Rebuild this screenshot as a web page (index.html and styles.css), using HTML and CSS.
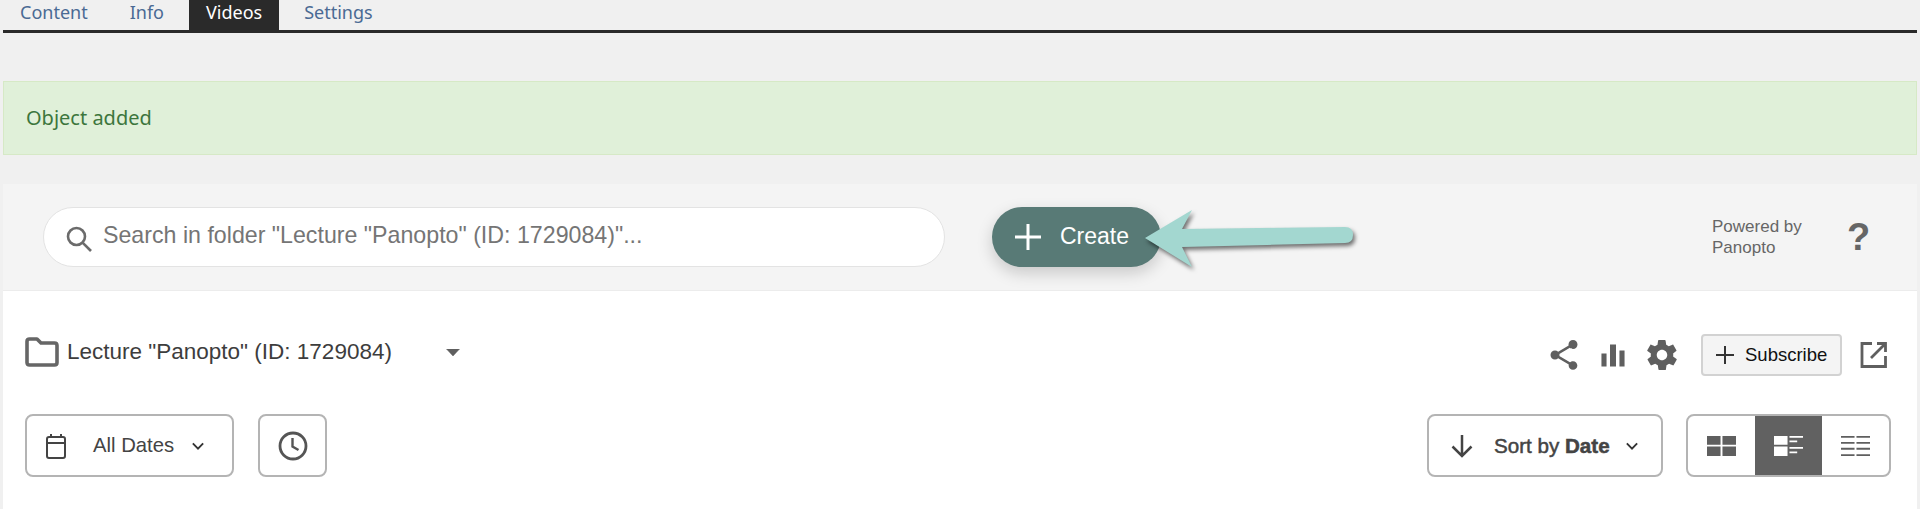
FILE: index.html
```html
<!DOCTYPE html>
<html lang="en">

    <head>
        <meta charset="UTF-8">
        <meta name="viewport" content="width=device-width, initial-scale=1.0">
        <title>Videos</title>

        <link rel="stylesheet" href="styles.css">

    </head>

    <body>

        <nav class="tabs">
            <a class="tab">Content</a>
            <a class="tab">Info</a>
            <a class="tab tab_active">Videos</a>
            <a class="tab">Settings</a>
        </nav>

        <div class="alert">Object added</div>

        <main class="panel">

            <div class="search_bar">
                <div class="search_box">
                    <svg class="search_icon" viewBox="0 0 28 28"><circle cx="11.5" cy="11.5" r="8.5" fill="none" stroke="#6b6b6b" stroke-width="2.6"/><path d="M17.8 17.8 L26 26" stroke="#6b6b6b" stroke-width="2.6" fill="none"/></svg>
                    <span class="search_text">Search in folder "Lecture "Panopto" (ID: 1729084)"...</span>
                </div>
                <div class="create_wrap">
                    <button class="create_button">
                        <svg class="create_plus" viewBox="0 0 26 26"><path d="M13 0 V26 M0 13 H26" stroke="#fff" stroke-width="3" fill="none"/></svg>
                        <span class="create_text">Create</span>
                    </button>
                    <svg class="arrow" viewBox="0 0 220 70"><path d="M5 33 L52 5 L42 24 L205 22 Q213 22 213 30 Q213 38 205 38 L42 42 L52 62 Z" fill="#a3d7d0"/></svg>
                </div>
                <div class="powered">Powered by<br>Panopto</div>
                <div class="help">?</div>
            </div>

            <div class="folder_row">
                <svg class="folder_icon" viewBox="0 0 34 30"><path d="M2 4.500 Q2 2 4.500 2 H12 L16 6 H29.500 Q32 6 32 8.500 V25.500 Q32 28 29.500 28 H4.500 Q2 28 2 25.500 Z" fill="none" stroke="#666" stroke-width="3.600" stroke-linejoin="round"/></svg>
                <span class="folder_name">Lecture "Panopto" (ID: 1729084)</span>
                <svg class="caret" viewBox="0 0 14 7"><path d="M0.500 0 H13.500 L7 7 Z" fill="#5f5f5f" stroke="#5f5f5f" stroke-width="0.500" stroke-linejoin="round"/></svg>
                <div class="folder_actions">
                    <svg class="action_icon" viewBox="0 0 24 24"><path d="M18 16.1c-.8 0-1.5.3-2 .8l-7.1-4.2c.1-.2.1-.5.1-.7s0-.5-.1-.7l7-4.1c.5.5 1.3.8 2.1.8 1.7 0 3-1.3 3-3s-1.3-3-3-3-3 1.3-3 3c0 .2 0 .5.1.7l-7 4.1C7.500 9.300 6.800 9 6 9c-1.700 0-3 1.300-3 3s1.300 3 3 3c.8 0 1.500-.3 2.100-.8l7.100 4.200c-.1.2-.1.4-.1.600 0 1.600 1.300 2.900 2.900 2.900s2.900-1.300 2.900-2.900-1.300-2.900-2.900-2.900z" fill="#5f5f5f"/></svg>
                    <svg class="action_icon" viewBox="0 0 24 24"><path d="M4.300 11h3.400v8.700H4.300zM10 5h4v14.700h-4zM16.300 9h3.400v10.700h-3.400z" fill="#5f5f5f"/></svg>
                    <svg class="action_icon" viewBox="0 0 24 24"><path d="M19.400 13c0-.3.1-.6.1-1s0-.7-.1-1l2.100-1.600c.2-.2.2-.4.1-.6l-2-3.500c-.1-.2-.4-.3-.6-.2l-2.500 1c-.5-.4-1.100-.7-1.700-1l-.4-2.600c0-.3-.2-.5-.5-.5h-4c-.3 0-.5.2-.5.400l-.4 2.700c-.6.3-1.200.6-1.700 1l-2.500-1c-.2-.1-.5 0-.6.2l-2 3.500c-.1.2-.1.4.1.6L4.600 11c0 .3-.1.7-.1 1s0 .7.1 1l-2.100 1.600c-.2.2-.2.4-.1.6l2 3.500c.1.2.4.3.6.2l2.500-1c.5.4 1.100.7 1.700 1l.4 2.600c0 .3.2.5.5.5h4c.3 0 .5-.2.5-.4l.4-2.700c.6-.3 1.200-.6 1.700-1l2.500 1c.2.1.5 0 .6-.2l2-3.500c.1-.2.1-.4-.1-.6L19.400 13zM12 15.500c-1.900 0-3.500-1.600-3.500-3.500s1.600-3.500 3.500-3.500 3.500 1.600 3.500 3.500-1.600 3.500-3.500 3.500z" fill="#5f5f5f"/></svg>
                    <button class="subscribe_button">
                        <svg class="subscribe_plus" viewBox="0 0 18 18"><path d="M9 0 V18 M0 9 H18" stroke="#333" stroke-width="2" fill="none"/></svg>
                        <span>Subscribe</span>
                    </button>
                    <svg class="open_icon" viewBox="0 0 28 28"><path d="M12 2.500 H2 V25.500 H25.500 V15 M17 2.500 H25.500 V11 M25 3 L11 17" fill="none" stroke="#5f5f5f" stroke-width="2.800"/></svg>
                </div>
            </div>

            <div class="filter_row">
                <button class="box_button dates_button">
                    <svg class="calendar_icon" viewBox="0 0 22 26"><path d="M2 6 Q2 4 4 4 H18 Q20 4 20 6 V23 Q20 25 18 25 H4 Q2 25 2 23 Z M2 10 H20 M6 1 V5 M16 1 V5" fill="none" stroke="#444" stroke-width="2"/></svg>
                    <span>All Dates</span>
                    <svg class="chevron" viewBox="0 0 14 9"><path d="M1 1.500 L7 7.500 L13 1.500" fill="none" stroke="#333" stroke-width="2.200"/></svg>
                </button>
                <button class="box_button clock_button">
                    <svg class="clock_icon" viewBox="0 0 30 30"><circle cx="15" cy="15" r="13" fill="none" stroke="#555" stroke-width="2.800"/><path d="M14.500 7 V15.500 L20.500 19" fill="none" stroke="#555" stroke-width="2.400"/></svg>
                </button>
                <button class="box_button sort_button">
                    <svg class="sort_icon" viewBox="0 0 24 24"><path d="M12 1 V22 M2.500 12.500 L12 22 L21.500 12.500" fill="none" stroke="#444" stroke-width="2.500"/></svg>
                    <span class="sort_label">Sort by <b>Date</b></span>
                    <svg class="chevron sort_chevron" viewBox="0 0 14 9"><path d="M1 1.500 L7 7.500 L13 1.500" fill="none" stroke="#333" stroke-width="2.200"/></svg>
                </button>
                <div class="view_group">
                    <div class="view_item">
                        <svg class="view_icon" viewBox="0 0 30 22" preserveAspectRatio="none"><path d="M0 0h14v9.500H0zM16 0h14v9.500H16zM0 11.500h14V22H0zM16 11.500h14V22H16z" fill="#5f5f5f"/></svg>
                    </div>
                    <div class="view_item view_active">
                        <svg class="view_icon" viewBox="0 0 30 22" preserveAspectRatio="none"><path d="M0 0h14v9.500H0zM0 11.500h14V22H0zM16 0h14v2H16zM16 5h8v2H16zM16 12h14v2H16zM16 17h8v2H16z" fill="#fff"/></svg>
                    </div>
                    <div class="view_item">
                        <svg class="view_icon" viewBox="0 0 30 22" preserveAspectRatio="none"><path d="M0 0h14v2H0zM16 0h14v2H16zM0 6.500h14v2H0zM16 6.500h14v2H16zM0 13h14v2H0zM16 13h14v2H16zM0 20h14v2H0zM16 20h14v2H16z" fill="#5f5f5f"/></svg>
                    </div>
                </div>
            </div>

        </main>

    </body>

</html>
```
FILE: styles.css
```css
html {
    overflow: hidden;
}

body {
    margin: 0;
    padding: 0 3px;
    height: 100vh;
    display: flex;
    flex-direction: column;
    background-color: #f0f0f0;
    font-family: "Liberation Sans", Arial, sans-serif;
}

button {
    font-family: inherit;
}

.tabs {
    display: flex;
    gap: 8px;
    height: 30px;
    border-bottom: 3px solid #2a2a2a;
}

.tab {
    padding: 0 17px;
    font-family: "Noto Sans", sans-serif;
    font-size: 18px;
    line-height: 25px;
    color: #4a6a94;
}

.tab_active {
    background-color: #2a2a2a;
    color: white;
}

.alert {
    margin-top: 48px;
    height: 72px;
    line-height: 72px;
    padding-left: 22px;
    background-color: #e0f0d9;
    border: 1px solid #d6e9c6;
    color: #3c763d;
    font-family: "Noto Sans", sans-serif;
    font-size: 20px;
}

.panel {
    flex-grow: 1;
    margin-top: 29px;
    background-color: white;
}

.search_bar {
    display: flex;
    align-items: center;
    height: 106px;
    padding-left: 40px;
    background-color: #f4f4f4;
    border-bottom: 1px solid #ececec;
}

.search_box {
    display: flex;
    align-items: center;
    box-sizing: border-box;
    width: 902px;
    height: 60px;
    padding-left: 21px;
    background-color: white;
    border: 1px solid #e3e3e3;
    border-radius: 30px;
    font-size: 23.200px;
    color: #757575;
}

.search_text {
    margin-bottom: 3px;
}

.search_icon {
    width: 28px;
    height: 28px;
    margin-top: 4px;
    margin-right: 10px;
}

.create_wrap {
    position: relative;
    margin-left: 47px;
}

.create_button {
    display: flex;
    align-items: center;
    width: 169px;
    height: 60px;
    padding: 0 0 0 23px;
    background-color: #587a76;
    border: none;
    border-radius: 30px;
    box-shadow: 0 6px 16px rgba(0, 0, 0, 0.18);
    color: white;
    font-size: 23px;
}

.create_text {
    margin-bottom: 2px;
}

.create_plus {
    width: 26px;
    height: 26px;
    margin-right: 19px;
}

.arrow {
    position: absolute;
    left: 148px;
    top: -2px;
    width: 220px;
    height: 70px;
    filter: drop-shadow(2px 3px 2px rgba(0, 0, 0, 0.55));
}

.powered {
    margin-left: auto;
    width: 135px;
    font-size: 17px;
    line-height: 21px;
    color: #666;
}

.help {
    width: 70px;
    font-size: 38px;
    font-weight: bold;
    color: #666;
}

.folder_row {
    display: flex;
    align-items: center;
    height: 42px;
    margin-top: 43px;
    padding: 0 29px 0 22px;
}

.folder_icon,
.folder_name,
.caret {
    margin-bottom: 6px;
}

.folder_icon {
    width: 34px;
    height: 30px;
    margin-right: 8px;
}

.folder_name {
    font-size: 22.500px;
    color: #3d3d3d;
}

.caret {
    width: 14px;
    height: 7px;
    margin-left: 54px;
}

.folder_actions {
    display: flex;
    align-items: center;
    margin-left: auto;
}

.action_icon {
    width: 36px;
    height: 36px;
    margin-right: 13px;
}

.subscribe_button {
    display: flex;
    align-items: center;
    box-sizing: border-box;
    width: 141px;
    height: 42px;
    padding: 0 0 0 13px;
    margin-left: 8px;
    background-color: #f4f4f4;
    border: 2px solid #d2d2d2;
    border-radius: 4px;
    font-size: 18.500px;
    color: #111;
}

.subscribe_plus {
    width: 18px;
    height: 18px;
    margin-right: 11px;
}

.open_icon {
    width: 28px;
    height: 28px;
    margin-left: 18px;
}

.filter_row {
    display: flex;
    align-items: center;
    margin-top: 38px;
    padding: 0 26px 0 22px;
}

.box_button {
    display: flex;
    align-items: center;
    box-sizing: border-box;
    height: 63px;
    padding: 0;
    background-color: white;
    border: 2px solid #b4b4b4;
    border-radius: 8px;
    font-size: 20.300px;
    color: #444;
}

.dates_button {
    width: 209px;
    padding-left: 18px;
}

.calendar_icon {
    width: 22px;
    height: 26px;
    margin-right: 26px;
}

.chevron {
    width: 12px;
    height: 8px;
    margin-left: 18px;
}

.sort_chevron {
    margin-left: 16px;
}

.clock_button {
    width: 69px;
    justify-content: center;
    margin-left: 24px;
}

.clock_icon {
    width: 30px;
    height: 30px;
}

.sort_button {
    width: 236px;
    padding-left: 21px;
    margin-left: auto;
}

.sort_icon {
    width: 24px;
    height: 24px;
    margin-right: 20px;
}

.sort_label {
    font-size: 20.600px;
    -webkit-text-stroke: 0.500px #444;
}

.view_group {
    display: flex;
    box-sizing: border-box;
    height: 63px;
    margin-left: 23px;
    border: 2px solid #b4b4b4;
    border-radius: 8px;
    overflow: hidden;
}

.view_item {
    display: flex;
    align-items: center;
    justify-content: center;
    width: 67px;
}

.view_active {
    background-color: #616161;
}

.view_icon {
    width: 29px;
    height: 20px;
}
```
